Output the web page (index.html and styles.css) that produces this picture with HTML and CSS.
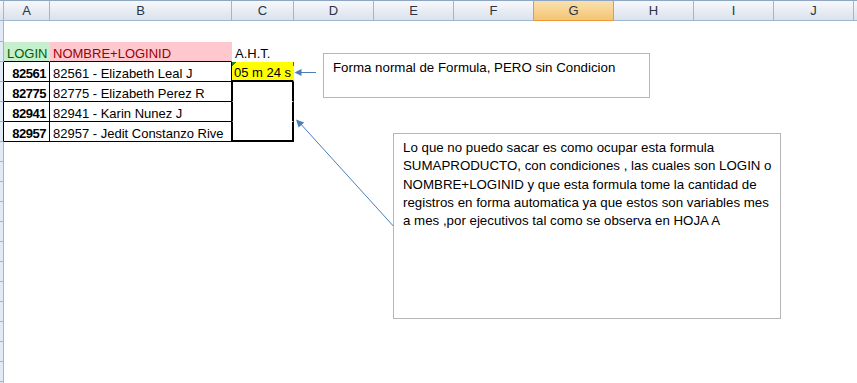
FILE: index.html
```html
<!DOCTYPE html>
<html lang="es">
<head>
<meta charset="utf-8">
<title>Hoja</title>
<link rel="stylesheet" href="styles.css">
</head>
<body>
<div class="sheet">
  <div class="row colhead">
    <div class="c corner"></div>
    <div class="c ch">A</div>
    <div class="c ch">B</div>
    <div class="c ch">C</div>
    <div class="c ch">D</div>
    <div class="c ch">E</div>
    <div class="c ch pre-sel">F</div>
    <div class="c ch sel">G</div>
    <div class="c ch">H</div>
    <div class="c ch">I</div>
    <div class="c ch">J</div>
    <div class="c ch"></div>
  </div>
  <div class="row r-first"><div class="c rh"></div></div>
  <div class="row">
    <div class="c rh"></div>
    <div class="c hd-login">LOGIN</div>
    <div class="c hd-name">NOMBRE+LOGINID</div>
    <div class="c">A.H.T.</div>
  </div>
  <div class="row">
    <div class="c rh rh-tb"></div>
    <div class="c tb num">82561</div>
    <div class="c tb">82561 - Elizabeth Leal J</div>
    <div class="c aht">05 m 24 s</div>
  </div>
  <div class="row">
    <div class="c rh rh-tb"></div>
    <div class="c tb num">82775</div>
    <div class="c tb">82775 - Elizabeth Perez R</div>
    <div class="c box"></div>
  </div>
  <div class="row">
    <div class="c rh rh-tb"></div>
    <div class="c tb num">82941</div>
    <div class="c tb">82941 - Karin Nunez J</div>
    <div class="c box"></div>
  </div>
  <div class="row">
    <div class="c rh rh-tb"></div>
    <div class="c tb num">82957</div>
    <div class="c tb">82957 - Jedit Constanzo Rive</div>
    <div class="c box box-end"></div>
  </div>
  <div class="row"><div class="c rh"></div></div>
  <div class="row"><div class="c rh"></div></div>
  <div class="row"><div class="c rh"></div></div>
  <div class="row"><div class="c rh"></div></div>
  <div class="row"><div class="c rh"></div></div>
  <div class="row"><div class="c rh"></div></div>
  <div class="row"><div class="c rh"></div></div>
  <div class="row"><div class="c rh"></div></div>
  <div class="row"><div class="c rh"></div></div>
  <div class="row"><div class="c rh"></div></div>
  <div class="row"><div class="c rh"></div></div>
  <div class="row"><div class="c rh"></div></div>
  <div class="row"><div class="c rh"></div></div>
</div>

<div class="note note-1">Forma normal de Formula, PERO sin Condicion</div>
<div class="note note-2">Lo que no puedo sacar es como ocupar esta formula<br>SUMAPRODUCTO, con condiciones , las cuales son LOGIN o<br>NOMBRE+LOGINID y que esta formula tome la cantidad de<br>registros en forma automatica ya que estos son variables mes<br>a mes ,por ejecutivos tal como se observa en HOJA A</div>

<svg class="arrows" width="857" height="383" viewBox="0 0 857 383" aria-hidden="true">
  <line x1="316" y1="72.5" x2="300" y2="72.5" stroke="#4a7ebb" stroke-width="1"/>
  <polygon points="294.5,72.5 301.5,69 301.5,76" fill="#4a7ebb"/>
  <line x1="393.3" y1="226" x2="300" y2="123.2" stroke="#4a7ebb" stroke-width="1"/>
  <polygon points="296,119.5 298.6,127.6 304.2,122.6" fill="#4a7ebb"/>
</svg>
</body>
</html>
```
FILE: styles.css
```css
* { box-sizing: border-box; }

html, body {
  margin: 0;
  padding: 0;
  background: #fff;
}

body {
  width: 857px;
  height: 383px;
  overflow: hidden;
  position: relative;
  font-family: "Liberation Sans", Arial, sans-serif;
  font-size: 13px;
  color: #000;
}

.sheet {
  display: flex;
  flex-direction: column;
}

.row {
  display: grid;
  grid-template-columns: 4px 46px 182px 62px repeat(7, 80px) 1fr;
  height: 20px;
  flex: none;
}

.colhead { height: 21px; }
.r-first { height: 21px; }

.c {
  border-right: 1px solid transparent;
  border-bottom: 1px solid transparent;
  display: flex;
  align-items: flex-end;
  padding: 0 3px;
  line-height: 15px;
  white-space: nowrap;
  overflow: hidden;
}

/* column headers */
.ch, .corner {
  background: linear-gradient(#f6f8fb, #dbe2ec);
  border-top: 1px solid #8ea6c3;
  border-right-color: #9eb6ce;
  border-bottom-color: #9eb6ce;
  justify-content: center;
  align-items: center;
  color: #2a3446;
  font-size: 13px;
}
.corner { padding: 0; }
.pre-sel { border-right-color: #f29536; }
.sel {
  background: linear-gradient(#fae0ae, #f3c574);
  border-right-color: #f29536;
  border-bottom-color: #f29536;
}

/* row header strip */
.rh {
  padding: 0;
  background: #e2eaf5;
  border-right-color: #9eb6ce;
  border-bottom-color: #9eb6ce;
}
.rh-tb { border-right-color: #000; }

/* table */
.hd-login {
  background: #c6efce;
  color: #006100;
  border-right-color: #c6efce;
  border-bottom-color: #000;
}
.hd-name {
  background: #ffc7ce;
  color: #9c0006;
  border-bottom-color: #000;
}
.tb {
  border-right-color: #000;
  border-bottom-color: #000;
}
.num {
  justify-content: flex-end;
  font-weight: bold;
  letter-spacing: -0.5px;
}
.aht {
  background: linear-gradient(135deg, #1f8a1f 0 3px, transparent 3px), #ffff00;
  justify-content: flex-end;
  padding-right: 2px;
  border-bottom: 2px solid #000;
}
.box {
  border-left: 1px solid #000;
  border-right: 2px solid #000;
}
.box-end { border-bottom: 2px solid #000; }

/* drawing objects */
.note {
  position: absolute;
  background: #fff;
  border: 1px solid #b6b6b6;
  font-size: 13.3px;
  line-height: 18.3px;
  padding: 5px 9px;
  white-space: nowrap;
}
.note-1 { left: 323px; top: 53px; width: 327px; height: 45px; }
.note-2 { left: 393px; top: 133px; width: 388px; height: 186px; }

.arrows {
  position: absolute;
  left: 0;
  top: 0;
  pointer-events: none;
}
```
